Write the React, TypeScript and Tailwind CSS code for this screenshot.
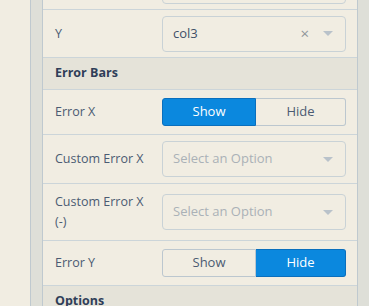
import React from 'react';

const font = { fontFamily: '"Open Sans", "Noto Sans", sans-serif' };

function Caret() {
  return (
    <svg width="10" height="5" viewBox="0 0 10 5" className="shrink-0">
      <path d="M0 0h10L5 5z" fill="#b9c2ca" />
    </svg>
  );
}

function Select({ value, placeholder }: { value?: string; placeholder?: string }) {
  return (
    <div className="flex h-[36px] w-full items-center rounded-[4px] border border-[#c9d2d6] bg-[#f1ede2] pl-[10px] pr-[12px]">
      {value ? (
        <span className="flex-1 text-[13px] text-[#3f5068]">{value}</span>
      ) : (
        <span className="flex-1 text-[13px] text-[#aab1b7]">{placeholder}</span>
      )}
      {value && <span className="mr-[14px] text-[15px] leading-none text-[#8f959a]">×</span>}
      <Caret />
    </div>
  );
}

function Toggle({ active }: { active: 'Show' | 'Hide' }) {
  const on = 'bg-[#0b88de] border-[#0a6fbd] text-white';
  const off = 'bg-[#f1ede2] border-[#bcc7cf] text-[#4b5b72]';
  return (
    <div className="flex h-[28px] w-full text-[13px]">
      <button className={`w-[94px] rounded-l-[3px] border ${active === 'Show' ? on : off}`}>Show</button>
      <button className={`flex-1 rounded-r-[3px] border border-l-0 ${active === 'Hide' ? on : off}`}>Hide</button>
    </div>
  );
}

function Row({ label, children, className = '' }: { label: React.ReactNode; children: React.ReactNode; className?: string }) {
  return (
    <div className={`flex items-center border-b border-[#ccd5d9] pl-[12px] pr-[11px] ${className}`}>
      <div className="w-[94px] shrink-0 text-[12.5px] leading-[20px] text-[#4b5b72]">{label}</div>
      <div className="ml-[13px] flex-1">{children}</div>
    </div>
  );
}

function Section({ title }: { title: string }) {
  return (
    <div className="flex h-[32px] items-center border-b border-[#ccd5d9] bg-[#e5e3d9] pl-[12px] text-[12.5px] font-bold text-[#2f3e58]">
      {title}
    </div>
  );
}

export default function App() {
  return (
    <div className="flex h-[306px] w-[369px] overflow-hidden bg-[#f1ede2]" style={font}>
      {/* left gutter */}
      <div className="w-[30px] shrink-0 bg-[#f1ede2]" />
      <div className="w-[13px] shrink-0 border-x border-[#bfc9cf] bg-[#dedfd8]" />

      {/* panel */}
      <div className="flex-1 overflow-hidden">
        <div className="-mt-[38px]">
          {/* row above, scrolled out of view */}
          <Row label="" className="h-[48px]">
            <div className="h-[36px] w-full rounded-[4px] border border-[#c9d2d6]" />
          </Row>
          <Row label="Y" className="h-[48px]">
            <Select value="col3" />
          </Row>
          <Section title="Error Bars" />
          <Row label="Error X" className="h-[45px]">
            <Toggle active="Show" />
          </Row>
          <Row label="Custom Error X" className="h-[49px]">
            <Select placeholder="Select an Option" />
          </Row>
          <Row label="Custom Error X (-)" className="h-[57px]">
            <Select placeholder="Select an Option" />
          </Row>
          <Row label="Error Y" className="h-[45px]">
            <Toggle active="Hide" />
          </Row>
          <Section title="Options" />
        </div>
      </div>

      {/* right gutter */}
      <div className="w-[12px] shrink-0 border-l border-[#bfc9cf] bg-[#dedfd8]" />
    </div>
  );
}
